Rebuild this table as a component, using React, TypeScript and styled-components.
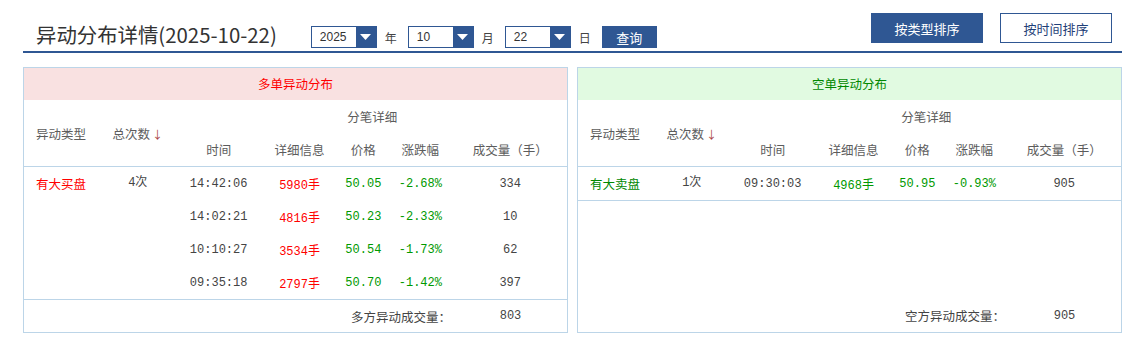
import styled, { createGlobalStyle } from 'styled-components';

const GlobalStyle = createGlobalStyle`
  body {
    margin: 0;
    background: #fff;
    font-family: 'Noto Sans CJK SC', 'Noto Sans', sans-serif;
    color: #555;
  }
`;

const BLUE = '#2f5793';
const LINE = '#bcd5e8';
const RED = '#ff0000';
const GREEN = '#009900';
const MONO = "'Liberation Mono', 'Noto Sans CJK SC', monospace";

const Page = styled.div`
  width: 1099px;
  margin-left: 23px;
`;

const TopBar = styled.div`
  display: flex;
  justify-content: space-between;
  align-items: flex-start;
  height: 38px;
  padding-top: 13px;
  border-bottom: 2px solid ${BLUE};
`;

const LeftGroup = styled.div`
  display: flex;
  align-items: center;
  margin-top: 10px;
  padding-left: 13px;
`;

const Title = styled.h1`
  margin: 0 34px 0 0;
  padding-bottom: 6px;
  font-size: 20.4px;
  line-height: 22px;
  font-weight: normal;
  color: #333;
  white-space: nowrap;
`;

const Select = styled.div`
  display: flex;
  width: 66px;
  height: 22px;
  box-sizing: border-box;
  border: 1px solid ${BLUE};
`;

const SelectValue = styled.span`
  flex: 1;
  padding-left: 8px;
  font-family: 'Liberation Sans', sans-serif;
  font-size: 12px;
  line-height: 20px;
  color: #333;
`;

const SelectArrow = styled.span`
  width: 20px;
  background: ${BLUE};
  display: flex;
  align-items: center;
  justify-content: center;
`;

const Unit = styled.span`
  width: 12px;
  margin: 0 11px 0 8px;
  font-size: 12px;
  color: #444;
`;

const QueryButton = styled.button`
  width: 55px;
  height: 22px;
  border: none;
  padding: 0;
  background: ${BLUE};
  color: #fff;
  font-family: inherit;
  font-size: 13px;
`;

const RightGroup = styled.div`
  display: flex;
  gap: 17px;
  margin-right: 10px;
`;

const SortButton = styled.button<{ $active?: boolean }>`
  width: 112px;
  height: 30px;
  padding: 0;
  box-sizing: border-box;
  font-family: inherit;
  font-size: 13px;
  border: 1px solid ${BLUE};
  background: ${(p) => (p.$active ? BLUE : '#fff')};
  color: ${(p) => (p.$active ? '#fff' : '#1f3f78')};
`;

const Panels = styled.div`
  display: flex;
  gap: 9px;
  margin-top: 14px;
`;

const Panel = styled.section`
  flex: 1;
  height: 266px;
  box-sizing: border-box;
  border: 1px solid ${LINE};
  display: flex;
  flex-direction: column;
`;

const PanelHead = styled.div<{ $tone: 'long' | 'short' }>`
  height: 32px;
  line-height: 32px;
  text-align: center;
  font-size: 12.5px;
  background: ${(p) => (p.$tone === 'long' ? '#f9e1e1' : '#e1fae1')};
  color: ${(p) => (p.$tone === 'long' ? RED : '#008800')};
`;

const Table = styled.table`
  width: 100%;
  table-layout: fixed;
  border-collapse: collapse;
  font-size: 12.5px;

  th,
  td {
    height: 33px;
    padding: 0;
    text-align: center;
    font-weight: normal;
    white-space: nowrap;
  }

  thead {
    border-bottom: 1px solid ${LINE};
  }

  tbody {
    border-bottom: 1px solid ${LINE};
  }

  th {
    color: #5c5c5c;
  }
`;

const SortMark = styled.span`
  color: #a44;
  font-size: 11px;
  margin-left: 2px;
`;

const Cell = styled.td<{ $color?: string; $mono?: boolean; $lead?: boolean }>`
  color: ${(p) => p.$color || '#444'};
  font-family: ${(p) => (p.$mono ? MONO : 'inherit')};
  font-size: ${(p) => (p.$mono ? '12px' : '12.5px')};
  vertical-align: ${(p) => (p.$lead ? 'top' : 'middle')};
  line-height: ${(p) => (p.$lead ? '33px' : 'normal')};
`;

const Footer = styled.div`
  margin-top: auto;
  height: 33px;
  display: flex;
  justify-content: flex-end;
  align-items: center;
  font-size: 12.5px;
`;

const FooterLabel = styled.span`
  color: #444;
  margin-right: 3px;
`;

const FooterValue = styled.span`
  width: 113px;
  text-align: center;
  font-family: ${MONO};
  font-size: 12px;
  color: #444;
`;

type Trade = { time: string; lots: number; price: string; change: string; vol: number };
type Group = { type: string; count: number; trades: Trade[] };

const longGroups: Group[] = [
  {
    type: '有大买盘',
    count: 4,
    trades: [
      { time: '14:42:06', lots: 5980, price: '50.05', change: '-2.68%', vol: 334 },
      { time: '14:02:21', lots: 4816, price: '50.23', change: '-2.33%', vol: 10 },
      { time: '10:10:27', lots: 3534, price: '50.54', change: '-1.73%', vol: 62 },
      { time: '09:35:18', lots: 2797, price: '50.70', change: '-1.42%', vol: 397 },
    ],
  },
];

const shortGroups: Group[] = [
  {
    type: '有大卖盘',
    count: 1,
    trades: [{ time: '09:30:03', lots: 4968, price: '50.95', change: '-0.93%', vol: 905 }],
  },
];

const widths = ['13.6%', '14.7%', '15.1%', '14.7%', '8.8%', '12.2%', '20.9%'];

function Arrow() {
  return (
    <svg width="11" height="6" viewBox="0 0 11 6">
      <path d="M0 0h11L5.5 6z" fill="#fff" />
    </svg>
  );
}

function DateSelect({ value }: { value: string }) {
  return (
    <Select>
      <SelectValue>{value}</SelectValue>
      <SelectArrow>
        <Arrow />
      </SelectArrow>
    </Select>
  );
}

function DistTable({
  tone,
  title,
  groups,
  footerLabel,
  total,
}: {
  tone: 'long' | 'short';
  title: string;
  groups: Group[];
  footerLabel: string;
  total: number;
}) {
  const typeColor = tone === 'long' ? RED : '#008800';
  const lotColor = tone === 'long' ? RED : GREEN;
  return (
    <Panel>
      <PanelHead $tone={tone}>{title}</PanelHead>
      <Table>
        <colgroup>
          {widths.map((w, i) => (
            <col key={i} style={{ width: w }} />
          ))}
        </colgroup>
        <thead>
          <tr>
            <th rowSpan={2}>异动类型</th>
            <th rowSpan={2}>
              总次数<SortMark>↓</SortMark>
            </th>
            <th colSpan={5}>分笔详细</th>
          </tr>
          <tr>
            <th>时间</th>
            <th>详细信息</th>
            <th>价格</th>
            <th>涨跌幅</th>
            <th>成交量（手）</th>
          </tr>
        </thead>
        <tbody>
          {groups.map((g) =>
            g.trades.map((t, i) => (
              <tr key={g.type + t.time}>
                {i === 0 && (
                  <>
                    <Cell rowSpan={g.trades.length} $color={typeColor} $lead>
                      {g.type}
                    </Cell>
                    <Cell rowSpan={g.trades.length} $mono $lead>
                      {g.count}次
                    </Cell>
                  </>
                )}
                <Cell $mono>{t.time}</Cell>
                <Cell $mono $color={lotColor}>
                  {t.lots}手
                </Cell>
                <Cell $mono $color={GREEN}>
                  {t.price}
                </Cell>
                <Cell $mono $color={GREEN}>
                  {t.change}
                </Cell>
                <Cell $mono>{t.vol}</Cell>
              </tr>
            ))
          )}
        </tbody>
      </Table>
      <Footer>
        <FooterLabel>{footerLabel}</FooterLabel>
        <FooterValue>{total}</FooterValue>
      </Footer>
    </Panel>
  );
}

export default function App() {
  return (
    <Page>
      <GlobalStyle />
      <TopBar>
        <LeftGroup>
          <Title>异动分布详情(2025-10-22)</Title>
          <DateSelect value="2025" />
          <Unit>年</Unit>
          <DateSelect value="10" />
          <Unit>月</Unit>
          <DateSelect value="22" />
          <Unit>日</Unit>
          <QueryButton>查询</QueryButton>
        </LeftGroup>
        <RightGroup>
          <SortButton $active>按类型排序</SortButton>
          <SortButton>按时间排序</SortButton>
        </RightGroup>
      </TopBar>
      <Panels>
        <DistTable tone="long" title="多单异动分布" groups={longGroups} footerLabel="多方异动成交量：" total={803} />
        <DistTable tone="short" title="空单异动分布" groups={shortGroups} footerLabel="空方异动成交量：" total={905} />
      </Panels>
    </Page>
  );
}
